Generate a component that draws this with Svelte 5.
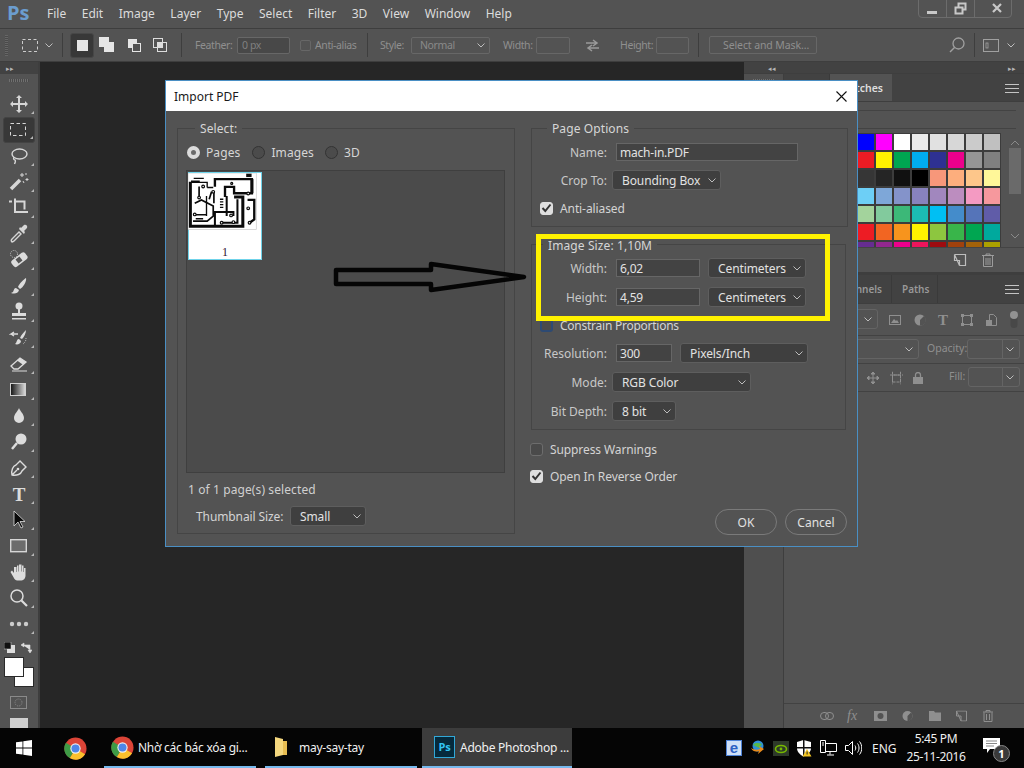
<script>
  const menus = ['File','Edit','Image','Layer','Type','Select','Filter','3D','View','Window','Help'];
  const swatches = [
    ['#0000ff','#ff00ff','#ffffff','#ebebeb','#e1e1e1','#d7d7d7','#cbcbcb','#c0c0c0'],
    ['#ed1c24','#fff200','#00a651','#00aeef','#2e3192','#ec008c','#959595','#808080'],
    ['#363636','#252525','#111111','#000000','#f7977a','#fdae7d','#fdc68a','#fff799'],
    ['#6dcff6','#7ea7d8','#8493ca','#8882be','#a187be','#bc8dbf','#f49ac2','#f6989d'],
    ['#a3d39c','#82ca9d','#3cb878','#1cbbb4','#00bff3','#448ccb','#5574b9','#605ca8'],
    ['#ed1c24','#f26522','#f7941d','#fff200','#8dc63f','#39b54a','#00a651','#00a99d'],
    ['#662d91','#92278f','#ec008c','#ed145b','#9e0b0f','#a0410d','#a36209','#aba000']
  ].flat();
</script>

{#snippet chev()}
  <svg class="chev" width="8" height="5" viewBox="0 0 8 5"><path d="M.5.5 4 4 7.5.5" fill="none" stroke="currentColor"/></svg>
{/snippet}
{#snippet sel(text, cls)}
  <div class="select {cls}"><span>{text}</span>{@render chev()}</div>
{/snippet}
{#snippet check()}
  <span class="cb on"><svg width="11" height="10" viewBox="0 0 11 10"><path d="M1.500 5 4.300 8 9.500 1.500" fill="none" stroke="#333" stroke-width="2"/></svg></span>
{/snippet}
{#snippet chrome()}
  <svg width="23" height="23" viewBox="0 0 24 24">
    <circle cx="12" cy="12" r="11.500" fill="#db4437"/>
    <path d="M12 12 22 18A11.500 11.500 0 0 1 6 22Z" fill="#fbc02d"/>
    <path d="M12 12 6 22A11.500 11.500 0 0 1 2 6Z" fill="#3e9b46"/>
    <circle cx="12" cy="12" r="5.400" fill="#eee"/><circle cx="12" cy="12" r="4.200" fill="#4e86e8"/>
  </svg>
{/snippet}

<div class="app">
  <header class="menubar">
    <span class="logo">Ps</span>
    <nav class="menus">{#each menus as m}<span>{m}</span>{/each}</nav>
    <div class="winctl">
      <svg width="94" height="18" viewBox="0 0 94 18">
        <path d="M.5 0v14a3.500 3.500 0 0 0 3.500 3.500h86a3.500 3.500 0 0 0 3.500-3.500V0M28.500 0v17.500M56.500 0v17.500" fill="none" stroke="#6c6c6c"/>
        <rect x="9" y="11" width="10" height="3" fill="#c8c8c8"/>
        <path d="M37.500 7.500h7v6h-7zM40.500 6.500v-3h7v6h-3" fill="none" stroke="#c8c8c8" stroke-width="2"/>
        <path d="M75 4l8 8M83 4l-8 8" stroke="#c8c8c8" stroke-width="2.200"/>
      </svg>
    </div>
  </header>

  <div class="options">
    <span class="grip-v"></span>
    <svg class="o-marq" width="16" height="13"><rect x=".5" y=".5" width="15" height="12" fill="none" stroke="#ccc" stroke-dasharray="3 2.500"/></svg>
    <span class="o-chev">{@render chev()}</span>
    <span class="vsep"></span>
    <div class="mode-btn"><svg width="11" height="11"><rect width="11" height="11" fill="#e6e6e6"/></svg></div>
    <svg class="m2" width="16" height="16"><rect width="10" height="10" fill="#e6e6e6"/><rect x="5" y="5" width="10" height="10" fill="#e6e6e6"/></svg>
    <svg class="m3" width="14" height="13"><rect width="9" height="9" fill="#e6e6e6"/><rect x="4.500" y="4.500" width="8" height="8" fill="#535353" stroke="#e6e6e6"/></svg>
    <svg class="m4" width="15" height="15"><rect x=".5" y=".5" width="9" height="9" fill="none" stroke="#ddd"/><rect x="4.500" y="4.500" width="9" height="9" fill="none" stroke="#ddd"/><rect x="4.500" y="4.500" width="5" height="5" fill="#ddd"/></svg>
    <span class="vsep s2"></span>
    <span class="dim l-feather">Feather:</span>
    <span class="dbox b-feather">0 px</span>
    <span class="dcb"></span>
    <span class="dim l-aa">Anti-alias</span>
    <span class="vsep s3"></span>
    <span class="dim l-style">Style:</span>
    <div class="dbox b-style"><span>Normal</span>{@render chev()}</div>
    <span class="dim l-w">Width:</span>
    <span class="dbox b-w"></span>
    <svg class="swap" width="15" height="13" viewBox="0 0 15 13"><path d="M1 4h10M8 1l4 3-4 3M14 9H4M7 6 3 9l4 3" fill="none" stroke="#9a9a9a" stroke-width="1.500"/></svg>
    <span class="dim l-h">Height:</span>
    <span class="dbox b-h"></span>
    <span class="vsep s4"></span>
    <span class="dbox b-mask">Select and Mask...</span>
    <svg class="search" width="16" height="16" viewBox="0 0 16 16"><circle cx="9.500" cy="6.500" r="5.500" fill="none" stroke="#a0a0a0" stroke-width="1.300"/><path d="M5.500 10.500 1 15" stroke="#a0a0a0" stroke-width="1.500"/></svg>
    <span class="vsep s5"></span>
    <svg class="wsp" width="16" height="13"><rect x=".5" y=".5" width="15" height="12" fill="none" stroke="#a0a0a0"/><rect x="3" y="4" width="2" height="5" fill="none" stroke="#a0a0a0" stroke-width=".8"/></svg>
    <span class="o-chev2">{@render chev()}</span>
  </div>

  <main class="work">
    <aside class="tools">
      <div class="strip"><span class="arrows">▸▸</span></div>
      <div class="grip-h"></div>
      <div class="tool t"><svg width="20" height="20" viewBox="0 0 20 20"><path d="M10 1l3 3h-2v5h5V7l3 3-3 3v-2h-5v5h2l-3 3-3-3h2v-5H4v2l-3-3 3-3v2h5V4H7z" fill="#d6d6d6"/></svg></div>
      <div class="tool t sel"><svg width="18" height="14"><rect x=".5" y=".5" width="15" height="12" fill="none" stroke="#d6d6d6" stroke-dasharray="3.500 2.500"/></svg></div>
      <div class="tool t"><svg width="20" height="20" viewBox="0 0 20 20"><ellipse cx="10.500" cy="8" rx="7.500" ry="5" fill="none" stroke="#d6d6d6" stroke-width="1.400"/><path d="M5 11c-1 2 0 3 1 3 1 1 0 3-.5 4" fill="none" stroke="#d6d6d6" stroke-width="1.400"/></svg></div>
      <div class="tool t"><svg width="20" height="20" viewBox="0 0 20 20"><path d="M2 17 11 8" stroke="#d6d6d6" stroke-width="3.500"/><path d="M13 1v4M11 3h4M18 6v3M16.500 7.500h3M17 1v2M14 9l1 2" stroke="#d6d6d6"/></svg></div>
      <div class="tool t"><svg width="20" height="20" viewBox="0 0 20 20"><path d="M0 3.500h3M6 .5v13.500h13M6 3.500h9.500v8" fill="none" stroke="#d6d6d6" stroke-width="2"/></svg></div>
      <div class="tool t"><svg width="20" height="20" viewBox="0 0 20 20"><path d="M3 18c-1-1-1-2 0-3l7-7 2 2-7 7c-.6.600-1.200.900-2 1Z" fill="none" stroke="#d6d6d6" stroke-width="1.400"/><path d="M10 5l5 5 1-2-1-1 3-3c1-2-1-4-3-3l-3 3-1-1Z" fill="#d6d6d6"/></svg></div>
      <div class="tool t"><svg width="20" height="20" viewBox="0 0 20 20"><rect x="2" y="6" width="17" height="8" rx="2.500" fill="#dcdcdc" transform="rotate(-38 10 10)"/><rect x="7.500" y="7.500" width="5" height="5" fill="#555" transform="rotate(-38 10 10)"/><circle cx="5" cy="4" r="3.500" fill="none" stroke="#ccc" stroke-dasharray="1 1.200"/></svg></div>
      <div class="tool t"><svg width="20" height="20" viewBox="0 0 20 20"><path d="M17 2c-2 1-7 6-8 9l2 2c3-1 7-8 6-11ZM7 12c-2 0-2 2-3 4l-2 1c3 1 7 1 8-3Z" fill="#dcdcdc"/></svg></div>
      <div class="tool t"><svg width="20" height="20" viewBox="0 0 20 20"><circle cx="10" cy="4" r="3.500" fill="#dcdcdc"/><path d="M9 7h2v4h6v3H3v-3h6zM3 16h14v1.500H3z" fill="#dcdcdc"/></svg></div>
      <div class="tool t"><svg width="20" height="20" viewBox="0 0 20 20"><path d="M17 2c-2 2-5 5-6 8l2 1c2-2 4-6 4-9ZM10 11c-2 0-2 2-3 4l-1 1c2 1 6 0 6-3Z" fill="#dcdcdc"/><path d="M9 6H2l3-2M2 6l3 2" fill="none" stroke="#dcdcdc" stroke-width="1.400"/><path d="M17 10a7 7 0 0 1-3 6" fill="none" stroke="#ccc" stroke-dasharray="1 1"/></svg></div>
      <div class="tool t"><svg width="20" height="20" viewBox="0 0 20 20"><path d="M2 12 11 4l6 4-8 7H5Z" fill="none" stroke="#dcdcdc" stroke-width="1.300"/><path d="M8 6.500 11 4l6 4-3 2.700Z" fill="#dcdcdc"/><path d="M3 17h15" stroke="#dcdcdc"/></svg></div>
      <div class="tool t"><svg width="18" height="14"><defs><linearGradient id="gr"><stop offset="0" stop-color="#111"/><stop offset="1" stop-color="#ddd"/></linearGradient></defs><rect x=".5" y=".5" width="15" height="12" fill="url(#gr)" stroke="#d0d0d0"/></svg></div>
      <div class="tool t"><svg width="20" height="20" viewBox="0 0 20 20"><path d="M10 2c1 3 5 6 5 10a5 5 0 0 1-10 0c0-4 4-7 5-10Z" fill="#dcdcdc"/></svg></div>
      <div class="tool t"><svg width="20" height="20" viewBox="0 0 20 20"><circle cx="12" cy="7" r="5.500" fill="#dcdcdc"/><path d="M8 11 3 17" stroke="#dcdcdc" stroke-width="2.500"/></svg></div>
      <div class="tool t"><svg width="20" height="20" viewBox="0 0 20 20"><path d="M3 17c-1-5 1-9 4-10l4-4 6 6-4 4c-1 3-5 5-10 4ZM3 17l5-5" fill="none" stroke="#dcdcdc" stroke-width="1.400"/><circle cx="9" cy="11" r="1.300" fill="#dcdcdc"/></svg></div>
      <div class="tool t"><span class="tglyph">T</span></div>
      <div class="tool t"><svg width="20" height="20" viewBox="0 0 20 20"><path d="M5 1v15l4-4 3 6 2-1-3-5.500h5Z" fill="#0a0a0a" stroke="#ddd" stroke-width=".8"/></svg></div>
      <div class="tool t"><svg width="18" height="14"><rect x=".7" y=".7" width="15.600" height="12" fill="#6c6c6c" stroke="#d6d6d6" stroke-width="1.400"/></svg></div>
      <div class="tool t"><svg width="20" height="20" viewBox="0 0 20 20"><path d="M5 5v6L3 8.500 1.500 10l4 7c1 1 2 1.500 4 1.500h2c3 0 5-2 5-5V6h-1.500v4h-.5V3.500h-1.500V9.500h-.5V2.500H10v7h-.5V3.500H8v6.500h-.5V5Z" fill="#dcdcdc"/></svg></div>
      <div class="tool t"><svg width="20" height="20" viewBox="0 0 20 20"><circle cx="8" cy="8" r="6" fill="none" stroke="#dcdcdc" stroke-width="1.500"/><path d="M12.500 12.500 18 18" stroke="#dcdcdc" stroke-width="2.200"/></svg></div>
      <div class="tool t"><svg width="20" height="6"><circle cx="3" cy="3" r="2.200" fill="#ccc"/><circle cx="10" cy="3" r="2.200" fill="#ccc"/><circle cx="17" cy="3" r="2.200" fill="#ccc"/></svg></div>
      <div class="mini">
        <svg width="11" height="11"><rect x="3" y="3" width="8" height="8" fill="#ddd"/><rect width="7" height="7" fill="#111" stroke="#ddd" stroke-width=".5"/></svg>
        <svg width="11" height="11" viewBox="0 0 11 11"><path d="M0 3 3 1v4zM2 3h7v5M9 11 7 8h4z" fill="#ddd" stroke="#ddd" stroke-width=".6"/></svg>
      </div>
      <div class="colors"><span class="bgc"></span><span class="fgc"></span></div>
      <div class="qmask"><svg width="17" height="13"><rect x=".5" y=".5" width="16" height="12" fill="none" stroke="#8a8a8a"/><circle cx="8.500" cy="6.500" r="3.500" fill="none" stroke="#8a8a8a" stroke-dasharray="1 1"/></svg></div>
      <div class="screenmode"></div>
    </aside>

    <div class="canvas"></div>

    <section class="dock">
      <div class="strip rs"><span class="arrows">◂◂</span><span class="arrows">▸▸</span></div>
      <div class="dockbody">
        <div class="iconcol"><div class="grip-h"></div></div>
        <div class="panels">
          <div class="panel p1">
            <div class="tabs"><span class="tab-ghost"></span><span class="tab active">Swatches</span><span class="pmenu"></span></div>
            <div class="sw-body">
              <div class="sw-lines"></div>
              <div class="sw-main">
                <div class="sw-grid">{#each swatches as c}<i style:background={c}></i>{/each}</div>
                <div class="scroll">
                  <svg width="10" height="6"><path d="M1 5 5 1l4 4" fill="none" stroke="#8a8a8a"/></svg>
                  <span class="thumb"></span>
                  <svg width="10" height="6"><path d="M1 1l4 4 4-4" fill="none" stroke="#8a8a8a"/></svg>
                </div>
              </div>
              <div class="sw-foot">
                <svg width="14" height="14" viewBox="0 0 14 14"><path d="M1.500 1.500h11v11h-6M1.500 1.500v6h5v5z" fill="none" stroke="#bdbdbd" stroke-width="1.200"/></svg>
                <svg width="12" height="14" viewBox="0 0 12 14"><path d="M0 2.500h12M4 2.500V1h4v1.500M1.500 3v10.500h9V3M4 5v7M6 5v7M8 5v7" fill="none" stroke="#9c9c9c"/></svg>
              </div>
            </div>
          </div>
          <div class="panel p2">
            <div class="tabs t2"><span class="tab-ghost g2"></span><span class="tab2 ch">Channels</span><span class="tab2 pa">Paths</span><span class="pmenu"></span></div>
            <div class="lrow r1">
              <span class="ctl c1">{@render chev()}</span>
              <svg class="ic i1" width="12" height="10"><rect x=".5" y=".5" width="11" height="9" fill="none" stroke="#8f8f8f"/><path d="M2 8l3-4 2 2 1-1 2 3z" fill="#8f8f8f"/></svg>
              <svg class="ic i2" width="12" height="12"><circle cx="6" cy="6" r="5.500" fill="#8f8f8f"/><path d="M6 6l4-4a5.500 5.500 0 0 1-4 9.500z" fill="#535353"/></svg>
              <span class="ic i3 tsm">T</span>
              <svg class="ic i4" width="12" height="12"><rect x="1.500" y="1.500" width="9" height="9" fill="none" stroke="#8f8f8f"/><path d="M0 0h3v3H0zM9 0h3v3H9zM0 9h3v3H0zM9 9h3v3H9z" fill="#8f8f8f"/></svg>
              <svg class="ic i5" width="11" height="12"><path d="M3.500.5h4l3 3v8h-7z" fill="none" stroke="#8f8f8f"/><rect y="6" width="6" height="6" fill="#8f8f8f"/></svg>
              <svg class="ic i6" width="10" height="18"><rect x="1.500" y="4" width="7" height="13" rx="3.500" fill="#484848"/><circle cx="5" cy="4" r="4" fill="#929292"/></svg>
            </div>
            <div class="lrow r2">
              <span class="ctl c2">{@render chev()}</span>
              <span class="dim op">Opacity:</span>
              <span class="ctl c3"><span class="cut"></span>{@render chev()}</span>
            </div>
            <div class="lrow r3">
              <svg class="ic j1" width="12" height="12" viewBox="0 0 12 12"><path d="M6 0v12M0 6h12M6 0 4 2h4zM6 12l-2-2h4zM0 6l2-2v4zM12 6l-2-2v4z" fill="#8f8f8f" stroke="#8f8f8f"/></svg>
              <svg class="ic j2" width="13" height="13"><path d="M2.500 3.500h8v7h-8zM0 3.500h13M2.500 0v13M10.500 0v13" fill="none" stroke="#8f8f8f" stroke-dasharray="3 1"/></svg>
              <svg class="ic j3" width="10" height="12"><rect y="5" width="10" height="7" fill="#8f8f8f"/><path d="M2.500 5V3a2.500 2.500 0 0 1 5 0v2" fill="none" stroke="#8f8f8f" stroke-width="1.300"/></svg>
              <span class="dim fi">Fill:</span>
              <span class="ctl c4"><span class="cut"></span>{@render chev()}</span>
            </div>
            <div class="lbody"></div>
            <div class="lfoot">
              <svg class="f1" width="14" height="8"><rect x=".5" y=".5" width="8" height="7" rx="3.500" fill="none" stroke="#8f8f8f"/><rect x="5.500" y=".5" width="8" height="7" rx="3.500" fill="none" stroke="#8f8f8f"/></svg>
              <span class="f2">fx</span>
              <svg class="f3" width="13" height="10"><rect width="13" height="10" fill="#8f8f8f"/><circle cx="6.500" cy="5" r="3" fill="#535353"/></svg>
              <svg class="f4" width="11" height="11"><circle cx="5.500" cy="5.500" r="5" fill="#8f8f8f"/><path d="M5.500 5.500 9 2a5 5 0 0 1-3.500 8.500z" fill="#535353"/></svg>
              <svg class="f5" width="12" height="10"><path d="M0 0h5l1 1.500h6V10H0z" fill="#8f8f8f"/></svg>
              <svg class="f6" width="11" height="11"><path d="M.5.500h10v10H5M.5.500v5h4.500v5z" fill="none" stroke="#8f8f8f"/></svg>
              <svg class="f7" width="10" height="12"><path d="M0 2h10M3 2V.5h4V2M1 2.500v9h8v-9M3.500 4v6M6.500 4v6" fill="none" stroke="#8f8f8f"/></svg>
            </div>
          </div>
        </div>
      </div>
    </section>
  </main>

  <footer class="taskbar">
    <div class="start"><svg width="16" height="16" viewBox="0 0 16 16"><path d="M0 2.300 6.500 1.400v6.200H0zM7.300 1.300 16 0v7.600H7.300zM0 8.400h6.500v6.200L0 13.700zM7.300 8.400H16V16l-8.700-1.300z" fill="#fff"/></svg></div>
    <div class="pin">{@render chrome()}</div>
    <div class="task t-chrome">{@render chrome()}<span>Nhờ các bác xóa gi...</span></div>
    <div class="task t-folder">
      <svg width="14" height="22" viewBox="0 0 14 22"><path d="M1 1 9 3v16l-8 2z" fill="#f4d77e"/><path d="M9 5h4v14H9z" fill="#e7bd52"/></svg>
      <span>may-say-tay</span>
    </div>
    <div class="task t-ps"><span class="psbadge">Ps</span><span>Adobe Photoshop ...</span></div>
    <div class="tray">
      <span class="e-ic">e</span>
      <svg width="16" height="16" viewBox="0 0 16 16"><circle cx="8" cy="6" r="5.500" fill="#2f8fd8"/><path d="M3 5c2-3 6-2 9-1l-3 4z" fill="#58b947"/><path d="M1 8c2 4 5 4 8 3l-1 3 6-5-5-3 1 3c-3 1-6 1-9-1z" fill="#e88a1b"/></svg>
      <svg width="16" height="15"><rect width="16" height="15" fill="#2e3a2a"/><ellipse cx="8" cy="8" rx="5.500" ry="3.500" fill="none" stroke="#76b900" stroke-width="1.600"/><circle cx="8" cy="8" r="1.400" fill="#76b900"/></svg>
      <svg width="16" height="17" viewBox="0 0 16 17"><path d="M7.500 0 1 2v6c0 4 3 6.500 6.500 8.500 2-1 8-4 7.500-8.500V2z" fill="#fff"/><path d="M7 0h1.500v16H7zM1 7h14v1.500H1z" fill="#111"/><path d="M11 9l4.500 7.500h-9z" fill="#f3c623"/><path d="M10.600 11.500h1v3h-1z" fill="#222"/></svg>
      <svg width="17" height="16" viewBox="0 0 17 16"><path d="M5.500 3.500h11v8h-11M.5.500h5v12h-5zM10 11.500v3M7 15h7M2 3h2M2 5h2" fill="none" stroke="#fff"/></svg>
      <svg width="17" height="14" viewBox="0 0 17 14"><path d="M.5 4.500h3l4-4v13l-4-4h-3zM10 4.500c1 1.500 1 3.500 0 5M12.500 2.500c2 2.500 2 6.500 0 9M14.500 .5c3 3.500 3 9.500 0 13" fill="none" stroke="#fff"/></svg>
      <span class="eng">ENG</span>
      <div class="clock"><span>5:45 PM</span><span>25-11-2016</span></div>
      <div class="notif">
        <svg width="17" height="15" viewBox="0 0 17 15"><path d="M0 0h17v11H7l-3 4v-4H0z" fill="#fff"/><path d="M3 3h11M3 5.500h11M3 8h8" stroke="#555" stroke-width=".7"/></svg>
        <span class="badge">1</span>
      </div>
    </div>
  </footer>

  <!-- Import PDF dialog -->
  <div class="dialog">
    <div class="title"><span>Import PDF</span>
      <svg width="11" height="11"><path d="M.5.500l10 10M10.500.500l-10 10" stroke="#111" stroke-width="1.100"/></svg>
    </div>
    <div class="dbody">
      <fieldset class="fs left">
        <legend>Select:</legend>
        <div class="radios">
          <span class="rd on"></span><span class="rl">Pages</span>
          <span class="rd"></span><span class="rl r-img">Images</span>
          <span class="rd"></span><span class="rl">3D</span>
        </div>
        <div class="list">
          <div class="thumb-card">
            <svg class="pcb" width="74" height="70" viewBox="55 172 220 208">
              <rect x="55" y="172" width="203" height="168" fill="#fff" stroke="#c8c8c8" stroke-width="2"/>
              <rect x="228" y="174" width="16" height="10" fill="#111"/>
              <g fill="none" stroke="#0a0a0a" stroke-width="7">
                <path d="M62 198V330H218V243H192" stroke-width="9"/>
                <path d="M64 198H90M135 213V190H245V232H192V213H165V243"/>
                <path d="M72 188H102M72 200H112V215" stroke-width="4"/>
                <path d="M88 212V245M132 228V262M125 228 118 250M112 215 130 215" stroke-width="5"/>
                <path d="M75 262 95 252 130 270V300L112 315H70" stroke-width="5"/>
                <path d="M72 296H112M78 308H100M110 240V300" stroke-width="4"/>
                <path d="M135 330V288H190V300M170 240V300" stroke-width="6"/>
                <path d="M202 250V320H155" stroke-width="6"/>
                <path d="M232 252H252V310L238 320" stroke-width="7"/>
                <path d="M150 250H160M150 258H160M150 266H160M150 274H160" stroke-width="4"/>
                <path d="M245 190V232" stroke-width="9"/>
              </g>
              <g fill="#fff" stroke="#0a0a0a" stroke-width="3.500">
                <circle cx="100" cy="212" r="4"/><circle cx="88" cy="245" r="4"/><circle cx="130" cy="228" r="4"/><circle cx="75" cy="295" r="4"/><circle cx="190" cy="318" r="4"/><circle cx="155" cy="320" r="4"/><circle cx="234" cy="233" r="4"/><circle cx="234" cy="277" r="4"/><circle cx="238" cy="320" r="4"/><circle cx="183" cy="298" r="4"/><circle cx="185" cy="203" r="3"/>
              </g>
            </svg>
            <span class="pnum">1</span>
          </div>
        </div>
        <div class="selcount">1 of 1 page(s) selected</div>
        <div class="thumbsize"><span class="lab tsl">Thumbnail Size:</span>{@render sel('Small','s-small')}</div>
      </fieldset>

      <div class="rightcol">
        <fieldset class="fs opt">
          <legend>Page Options</legend>
          <div class="row first"><span class="lbl">Name:</span><span class="inp i-name">mach-in.PDF</span></div>
          <div class="row"><span class="lbl">Crop To:</span>{@render sel('Bounding Box','s-crop')}</div>
          <div class="row"><span class="cbwrap">{@render check()}</span><span class="lab">Anti-aliased</span></div>
        </fieldset>

        <fieldset class="fs size">
          <legend>Image Size: 1,10M</legend>
          <div class="row first"><span class="lbl">Width:</span><span class="inp i-num">6,02</span>{@render sel('Centimeters','s-unit')}</div>
          <div class="row b9"><span class="lbl">Height:</span><span class="inp i-num">4,59</span>{@render sel('Centimeters','s-unit')}</div>
          <div class="row"><span class="cbwrap"><span class="cb blue"></span></span><span class="lab cp">Constrain Proportions</span></div>
          <div class="row"><span class="lbl">Resolution:</span><span class="inp i-res">300</span>{@render sel('Pixels/Inch','s-px')}</div>
          <div class="row b9"><span class="lbl">Mode:</span>{@render sel('RGB Color','s-mode')}</div>
          <div class="row b9"><span class="lbl">Bit Depth:</span>{@render sel('8 bit','s-bit')}</div>
        </fieldset>

        <div class="chk c-sup"><span class="cb"></span><span class="lab">Suppress Warnings</span></div>
        <div class="chk c-rev">{@render check()}<span class="lab">Open In Reverse Order</span></div>
        <div class="btns"><span class="btn">OK</span><span class="btn">Cancel</span></div>
      </div>
    </div>
  </div>

  <!-- hand-drawn annotations lying over the dialog -->
  <div class="yellow"></div>
  <svg class="arrow" width="200" height="34" viewBox="333 260 200 34">
    <path d="M336 270H431V264L524 277 431 290V284H336Z" fill="none" stroke="#050505" stroke-width="4.500" stroke-linejoin="round"/>
  </svg>
</div>

<style>
  :global(body){margin:0;background:#262626}
  .app{position:relative;width:1024px;height:768px;overflow:hidden;display:grid;grid-template-columns:1024px;grid-template-rows:29px 33px 666px 40px;font-family:"Noto Sans","Open Sans",sans-serif;font-size:12px;color:#d4d4d4;background:#262626}
  svg{display:block;flex:none}

  .menubar{display:flex;align-items:center;background:#535353;border-bottom:1px solid #3e3e3e;box-sizing:border-box;position:relative}
  .logo{font:bold 20px/1 "Open Sans",sans-serif;color:#6b9dcf;margin-left:7px;width:40px;margin-top:-2px}
  .menus{display:flex;gap:15.500px;color:#dcdcdc;margin-top:-1px}
  .winctl{margin-left:auto;margin-right:12px;align-self:flex-start}

  .options{display:flex;align-items:center;background:#535353;border-bottom:1px solid #3e3e3e;box-sizing:border-box;padding-left:5px;color:#8f8f8f;font-size:10.500px;letter-spacing:-.4px;white-space:nowrap;min-width:0}
  .grip-v{width:3px;height:21px;background:repeating-linear-gradient(#666 0 1px,#4a4a4a 1px 2px);margin-right:14px;flex:none}
  .o-marq{margin-right:7px}
  .o-chev{color:#bcbcbc;margin-right:9px;flex:none}
  .vsep{width:1px;height:24px;background:#3e3e3e;flex:none}
  .mode-btn{width:24px;height:25px;flex:none;background:#383838;border:1px solid #474747;border-radius:3px;box-sizing:border-box;display:flex;align-items:center;justify-content:center;margin-left:7px}
  .m2{margin-left:5px}.m3{margin-left:13px}.m4{margin-left:11px}
  .s2{margin-left:13px}
  .dim{color:#8f8f8f;flex:none}
  .dbox{box-sizing:border-box;border:1px solid #676767;height:17px;display:flex;align-items:center;flex:none;color:#808080;padding-left:4px;border-radius:2px}
  .l-feather{margin-left:13px;width:36px}
  .b-feather{width:53px;margin-left:6px;background:#484848}
  .dcb{width:11px;height:11px;border:1px solid #676767;border-radius:2px;margin-left:10px;flex:none;box-sizing:border-box}
  .l-aa{margin-left:4px;width:40px}
  .s3{margin-left:12px}
  .l-style{margin-left:12px;width:24px}
  .b-style{width:79px;margin-left:7px;justify-content:space-between;padding:0 4px 0 8px;color:#8a8a8a}
  .l-w{margin-left:13px;width:29px}
  .b-w{width:34px;margin-left:4px}
  .swap{margin-left:15px}
  .l-h{margin-left:20px;width:32px}
  .b-h{width:33px;margin-left:4px}
  .s4{margin-left:9px}
  .b-mask{width:108px;height:18px;margin-left:10px;padding-left:13px;color:#8f8f8f;letter-spacing:-.1px}
  .search{margin-left:132px}
  .s5{margin-left:9px}
  .wsp{margin-left:8px}
  .o-chev2{color:#6d6d6d;margin-left:8px;flex:none}

  .work{display:flex;min-height:0;min-width:0;position:relative}
  .tools{width:40px;flex:none;background:#535353;border-right:2px solid #3e3e3e;box-sizing:border-box;overflow:hidden}
  .strip{height:12px;background:#424242;display:flex;align-items:center;font-size:7px;color:#b5b5b5;padding:0 6px}
  .grip-h{height:14px;position:relative}
  .grip-h::after{content:"";position:absolute;left:9px;right:9px;top:5px;height:3px;background:repeating-linear-gradient(90deg,#707070 0 1px,#4a4a4a 1px 2px)}
  .tools .grip-h{margin-bottom:3px}
  .tool{height:26px;width:32px;margin-left:3px;display:flex;align-items:center;justify-content:center;position:relative;box-sizing:border-box}
  .tool::after{content:"";position:absolute;right:1px;bottom:3px;border:solid transparent;border-width:0 0 3px 3px;border-bottom-color:#b8b8b8}
  .tool.sel{background:#383838;border-radius:3px;border:1px solid #434343}
  .tglyph{font:bold 19px/1 "Liberation Serif",serif;color:#dcdcdc}
  .mini{display:flex;justify-content:space-between;padding:5px 6px 0 4px;height:11px;box-sizing:content-box}
  .colors{position:relative;margin-top:4px;padding-left:14px;padding-top:10px;box-sizing:content-box;height:20px}
  .bgc{display:block;width:18px;height:18px;background:#fff;border:1px solid #2a2a2a}
  .fgc{position:absolute;left:4px;top:0;width:18px;height:18px;background:#fff;border:1px solid #2a2a2a}
  .qmask{margin:9px 0 0 10px}
  .screenmode{margin:9px 0 0 10px;width:18px;height:14px;background:#d0d0d0}

  .canvas{flex:1;min-width:0;background:#262626}
  .dock{width:280px;flex:none;background:#535353;display:flex;flex-direction:column}
  .rs{justify-content:space-between;padding:0 8px 0 24px;box-shadow:inset 0 -1px #3e3e3e}
  .dockbody{flex:1;display:flex;min-height:0}
  .iconcol{width:39px;flex:none;border-right:1px solid #3e3e3e;background:#4f4f4f}
  .panels{flex:1;min-width:0;display:flex;flex-direction:column;background:#3e3e3e}
  .panel{background:#535353}
  .p1{height:198px;display:flex;flex-direction:column;margin-bottom:3px}
  .tabs{height:27px;flex:none;background:#424242;display:flex;align-items:stretch;position:relative;border-bottom:1px solid #3e3e3e}
  .tab-ghost{width:45px;border-right:1px solid #3a3a3a}
  .tab.active{width:62px;background:#535353;display:flex;align-items:center;justify-content:flex-end;padding-right:9px;box-sizing:border-box;color:#dedede;font-weight:600;font-size:10.500px}
  .pmenu{position:absolute;right:5px;top:10px;width:14px;height:7px;border-top:1px solid #c4c4c4;border-bottom:1px solid #c4c4c4;background:linear-gradient(#c4c4c4,#c4c4c4) center/100% 1px no-repeat}
  .sw-body{flex:1;display:flex;flex-direction:column;min-height:0}
  .sw-lines{margin:8px 8px 0;border-top:1px solid #434343;padding-top:18px;height:0;position:relative}
  .sw-lines::after{content:"";position:absolute;left:0;right:0;top:17px;border-top:1px solid #434343}
  .sw-main{height:114px;margin-top:4px;display:flex;overflow:hidden;flex:none}
  .sw-grid{margin-left:73px;width:144px;display:grid;grid-template-columns:repeat(8,18px);grid-auto-rows:18px;flex:none}
  .sw-grid i{display:block;border:1px solid #3c3c3c;box-sizing:border-box}
  .scroll{margin-left:7px;width:14px;display:flex;flex-direction:column;align-items:center;padding-top:7px;gap:2px;height:108px;box-sizing:border-box}
  .scroll .thumb{display:block;width:12px;height:46px;background:#6a6a6a;margin-bottom:37px}
  .sw-foot{flex:1;display:flex;align-items:center;justify-content:flex-end;gap:15px;padding-right:30px;border-top:1px solid #444}
  .p2{flex:1;display:flex;flex-direction:column;min-height:0}
  .t2{height:28px}
  .g2{width:107px}
  .tab2{display:flex;align-items:center;font-weight:600;font-size:10px;color:#999;border-right:1px solid #3a3a3a}
  .tab2.ch{position:absolute;left:48px;width:60px;top:0;bottom:0;justify-content:flex-end;padding-right:10px;box-sizing:border-box;border:0}
  .tab2.pa{width:46px;padding-left:10px;box-sizing:border-box}
  .lrow{height:31px;border-bottom:1px solid #424242;position:relative;flex:none}
  .r2,.r3{height:27px}
  .ic{position:absolute;top:50%;transform:translateY(-50%)}
  .ctl{position:absolute;box-sizing:border-box;border:1px solid #646464;border-radius:3px;display:flex;align-items:center;justify-content:flex-end;padding-right:5px;color:#7a7a7a;top:3px;height:20px}
  .c1{left:-1px;width:95px;top:5px}
  .c2{left:-1px;width:136px}
  .c3{left:183px;width:53px}
  .c4{left:184px;width:52px}
  .cut{position:absolute;right:16px;top:0;bottom:0;width:1px;background:#646464}
  .i1{left:105px}.i2{left:130px}.i3{left:154px}.i4{left:177px}.i5{left:202px}.i6{left:225px}
  .tsm{font:bold 15px/1 "Liberation Serif",serif;color:#8f8f8f}
  .op{position:absolute;left:143px;top:5px;font-size:10.500px}
  .fi{position:absolute;left:165px;top:5px;font-size:10.500px}
  .j1{left:83px}.j2{left:106px}.j3{left:129px}
  .lbody{flex:1;border-bottom:1px solid #424242}
  .lfoot{height:24px;display:flex;align-items:center;flex:none;position:relative}
  .lfoot>*{position:absolute;top:50%;transform:translateY(-50%)}
  .f1{left:36px}.f3{left:90px}.f4{left:118px}.f5{left:145px}.f6{left:172px}.f7{left:199px}
  .f2{left:63px;font:italic 14px "Liberation Serif",serif;color:#8f8f8f}

  .taskbar{display:flex;align-items:stretch;background:#050505;color:#f0f0f0;font-size:12px;position:relative;min-width:0}
  .start{width:48px;display:flex;align-items:center;justify-content:center;flex:none}
  .pin{width:52px;display:flex;align-items:center;justify-content:center;flex:none;padding-left:2px;box-sizing:border-box}
  .task{display:flex;align-items:center;box-sizing:border-box;border-bottom:2px solid #76b9ed;flex:none;white-space:nowrap;letter-spacing:-.25px}
  .t-chrome{width:152px;margin-left:4px;gap:4px;padding-left:7px}
  .t-folder{width:152px;margin-left:9px;padding-left:9px;gap:11px}
  .t-ps{width:150px;margin-left:5px;padding-left:12px;gap:5px;background:#3c3c3c}
  .psbadge{width:21px;height:22px;box-sizing:border-box;border:1px solid #31a8d8;background:#062a3c;color:#31c5f4;font:bold 11px/20px "Open Sans",sans-serif;text-align:center;flex:none}
  .tray{margin-left:auto;display:flex;align-items:center;flex:none;position:relative;height:100%}
  .tray>svg{margin-left:8px}
  .tray>svg:nth-of-type(2),.tray>svg:nth-of-type(3){margin-left:7px}
  .e-ic{width:16px;height:16px;background:#cfe0f7;border:1px solid #4d82d6;box-sizing:border-box;color:#2d62c4;font:bold 15px/13px "Liberation Sans",sans-serif;text-align:center}
  .eng{margin-left:10px;font-size:12px;width:34px}
  .clock{display:flex;flex-direction:column;align-items:center;width:60px;line-height:18px;font-size:12px;white-space:nowrap;letter-spacing:-.35px}
  .notif{position:relative;width:58px;height:100%;display:flex;align-items:center;justify-content:center}
  .notif svg{margin:-6px 8px 0 0}
  .badge{position:absolute;left:27px;top:17px;width:15px;height:15px;border-radius:50%;background:#3a3a3a;border:1px solid #888;text-align:center;line-height:15px;font-size:11px;font-weight:700;color:#fff}

  .dialog{position:absolute;left:165px;top:80px;width:693px;height:467px;box-sizing:border-box;border:1px solid #4a8fc4;background:#535353}
  .title{height:30px;background:#fff;color:#1a1a1a;display:flex;align-items:center;justify-content:space-between;padding:0 10px 0 8px;font-size:12px}
  .dbody{display:flex;padding:9px 0 0 11px;gap:16px;align-items:flex-start}
  .fs{margin:0;padding:0;border:1px solid #454545;min-width:0;box-sizing:border-box;display:block}
  .fs legend{padding:0 5px;line-height:18px;height:16px;font-size:12px;color:#d6d6d6;letter-spacing:.1px}
  .left{width:338px;height:414px}
  .left legend{margin-left:17px}
  .radios{display:flex;align-items:center;height:20px;margin:6px 0 0 9px;color:#d6d6d6}
  .rd{width:13px;height:13px;border-radius:50%;border:1px solid #333;background:#4b4b4b;box-sizing:border-box;flex:none}
  .rd.on{border:4px solid #dcdcdc;background:#6b6b6b}
  .rl{margin:0 12px 0 6px;letter-spacing:.1px}
  .rl.r-img{margin-right:11px}
  .list{margin:8px 0 0 8px;width:319px;height:303px;box-sizing:border-box;border:1px solid #3f3f3f;background:#4b4b4b;padding:1px}
  .thumb-card{width:74px;height:88px;box-sizing:border-box;background:#fff;border:1px solid #6fd3ea;position:relative;display:flex;flex-direction:column;align-items:center}
  .pcb{margin-left:-1px}
  .pnum{font:12px/14px "Liberation Serif",serif;color:#301030;position:absolute;bottom:0}
  .selcount{margin:7px 0 0 10px;line-height:20px;letter-spacing:.1px;color:#d0d0d0}
  .thumbsize{display:flex;align-items:center;margin:6px 0 0 18px;height:20px}
  .tsl{width:94px;letter-spacing:.05px}
  .lab{letter-spacing:-.1px;color:#d4d4d4;white-space:nowrap}
  .lab.cp{letter-spacing:-.25px}
  .select{box-sizing:border-box;height:20px;background:#3f3f3f;border:1px solid #5e5e5e;border-radius:3px;display:flex;align-items:center;justify-content:space-between;padding:0 4px 0 9px;color:#e2e2e2;flex:none;letter-spacing:-.1px}
  .chev{color:#bdbdbd;flex:none}
  .s-small{width:76px}
  .rightcol{width:317px}
  .opt{width:317px;height:107px}
  .opt legend{margin-left:15px}
  .size legend{margin-left:11px;line-height:20px}
  .size{width:315px;height:194px;margin-top:9px}
  .row{display:flex;align-items:center;height:20px;margin-top:8px}
  .row.first{margin-top:6px}
  .row.b9{margin-top:9px}
  .lbl{width:75px;margin-right:5px;text-align:right;color:#c8c8c8;flex:none}
  .inp{box-sizing:border-box;height:18px;margin-left:4px;background:#434343;border:1px solid #666;display:flex;align-items:center;padding-left:3px;color:#e2e2e2;flex:none;letter-spacing:-.2px}
  .i-name{width:182px}
  .i-num{width:84px;margin-right:8px}
  .i-res{width:56px;margin-right:8px}
  .s-crop{width:109px}
  .s-unit{width:98px}
  .s-px{width:128px}
  .s-mode{width:139px}
  .s-bit{width:64px}
  .cbwrap{margin:0 7px 0 8px;display:flex}
  .cb{width:13px;height:13px;box-sizing:border-box;border:1px solid #6d6d6d;border-radius:3px;background:#4a4a4a;display:flex;align-items:center;justify-content:center;flex:none}
  .cb.on{background:#dedede;border-color:#dedede}
  .cb.blue{border:2px solid #2d4a73;background:#4a4a4a}
  .chk{display:flex;align-items:center;height:20px;gap:7px;margin-left:-1px}
  .c-sup{margin-top:9px}
  .c-rev{margin-top:7px}
  .btns{display:flex;justify-content:flex-end;gap:8px;margin:23px 1px 0 0}
  .btn{width:62px;height:26px;box-sizing:border-box;border:1px solid #7a7a7a;border-radius:13px;display:flex;align-items:center;justify-content:center;color:#e0e0e0}

  .yellow{position:absolute;left:536px;top:234px;width:294px;height:87px;box-sizing:border-box;border:5px solid #fff200}
  .arrow{position:absolute;left:333px;top:260px}
</style>
